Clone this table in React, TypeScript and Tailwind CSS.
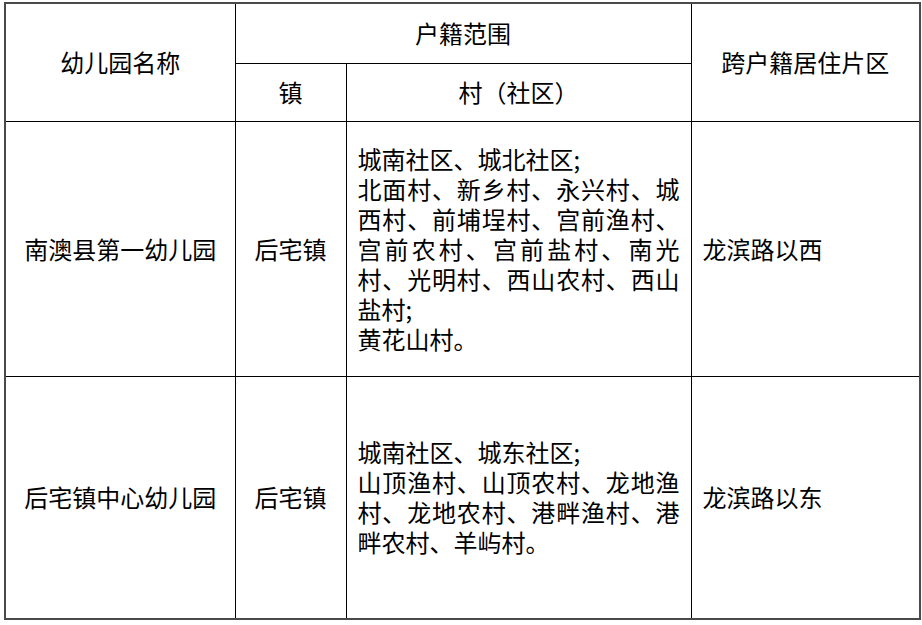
import React from "react";

const cell = "border border-black align-middle";

export default function App() {
  return (
    <div
      className="w-[922px] h-[625px] bg-white pl-[4px] pt-[2px] text-black"
      style={{ fontFamily: '"Noto Sans CJK SC", "Noto Sans", sans-serif' }}
    >
      <table className="border-collapse table-fixed w-[915px] border-2 border-[#4a4a4a] text-[24px] leading-[30px]">
        <colgroup>
          <col className="w-[230px]" />
          <col className="w-[111px]" />
          <col className="w-[345px]" />
          <col className="w-[229px]" />
        </colgroup>
        <tbody>
          <tr className="h-[60px]">
            <td rowSpan={2} className={`${cell} text-center`}>幼儿园名称</td>
            <td colSpan={2} className={`${cell} text-center`}>户籍范围</td>
            <td rowSpan={2} className={`${cell} text-center`}>跨户籍居住片区</td>
          </tr>
          <tr className="h-[58px]">
            <td className={`${cell} text-center`}>镇</td>
            <td className={`${cell} text-center`}>村（社区）</td>
          </tr>
          <tr className="h-[255px]">
            <td className={`${cell} text-center`}>南澳县第一幼儿园</td>
            <td className={`${cell} text-center`}>后宅镇</td>
            <td className={`${cell} px-[11px] text-justify`}>
              城南社区、城北社区;
              <br />
              北面村、新乡村、永兴村、城西村、前埔埕村、宫前渔村、宫前农村、宫前盐村、南光村、光明村、西山农村、西山盐村;
              <br />
              黄花山村。
            </td>
            <td className={`${cell} px-[11px]`}>龙滨路以西</td>
          </tr>
          <tr className="h-[243px]">
            <td className={`${cell} text-center`}>后宅镇中心幼儿园</td>
            <td className={`${cell} text-center`}>后宅镇</td>
            <td className={`${cell} px-[11px] text-justify`}>
              城南社区、城东社区;
              <br />
              山顶渔村、山顶农村、龙地渔村、龙地农村、港畔渔村、港畔农村、羊屿村。
            </td>
            <td className={`${cell} px-[11px]`}>龙滨路以东</td>
          </tr>
        </tbody>
      </table>
    </div>
  );
}
